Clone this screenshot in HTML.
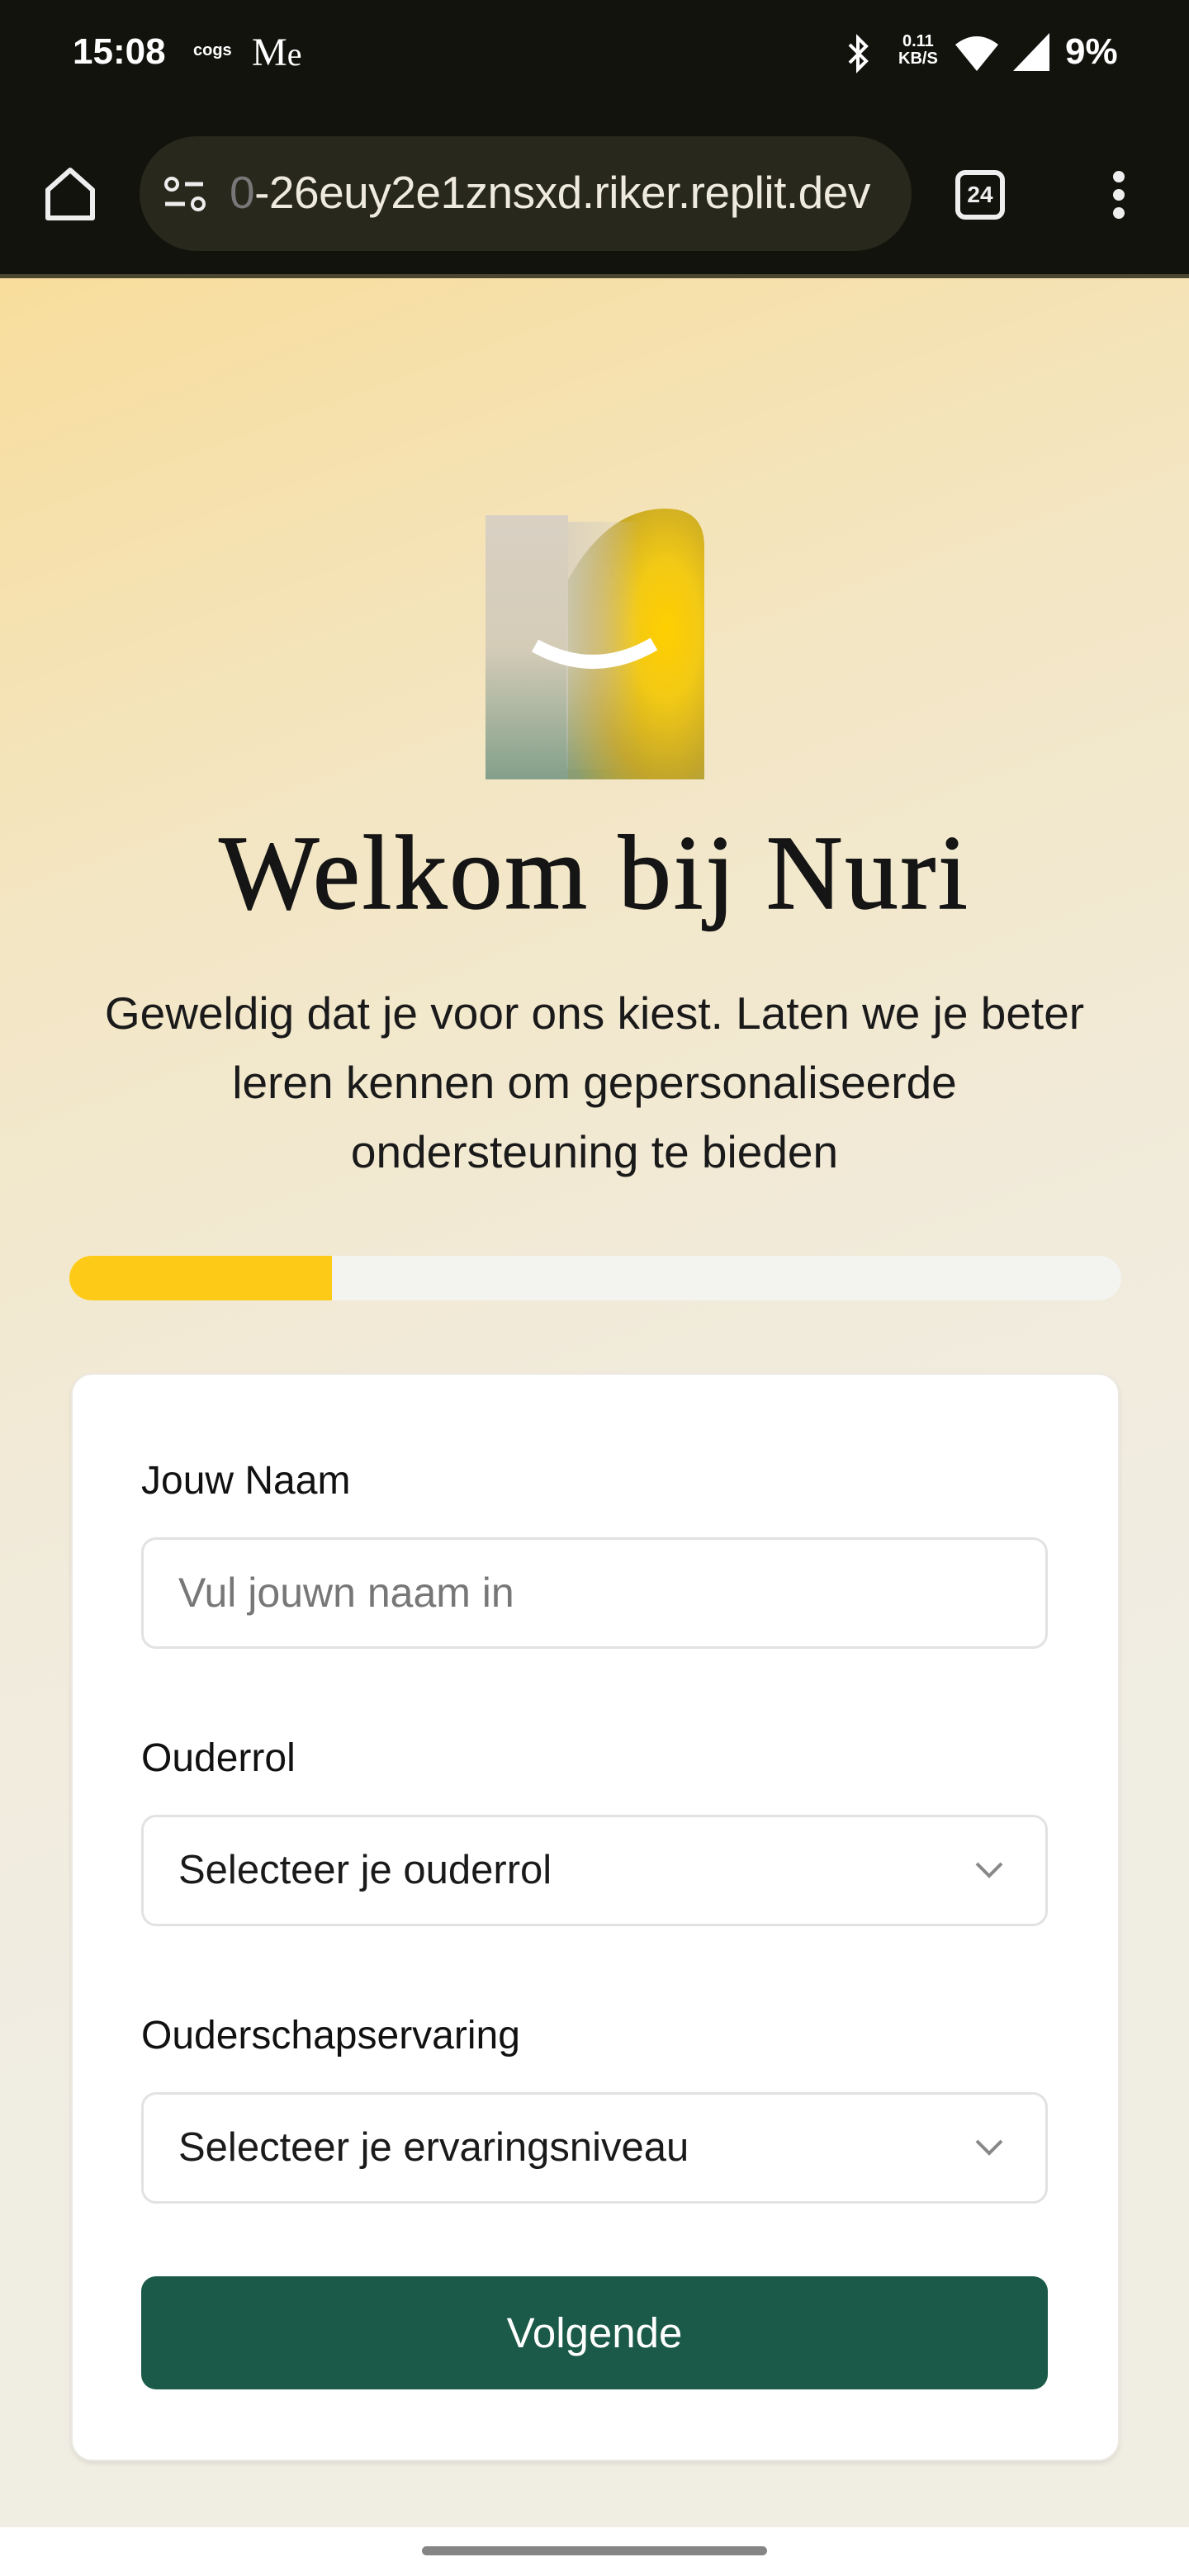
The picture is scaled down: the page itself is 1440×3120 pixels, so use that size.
<!DOCTYPE html>
<html><head><meta charset="utf-8"><style>
*{margin:0;padding:0;box-sizing:border-box}
body{width:1440px;height:3120px;overflow:hidden;font-family:"Liberation Sans",sans-serif;position:relative;background:#fff}
.top{position:absolute;left:0;top:0;width:1440px;height:332px;background:#13130e;color:#fff}
.line{position:absolute;left:0;top:332px;width:1440px;height:5px;background:#4a4630}
.page{position:absolute;left:0;top:337px;width:1440px;height:2724px;background:linear-gradient(160deg,#f8dd9c 0%,#f3e6c4 25%,#f1ebdc 50%,#f0ede3 70%,#f0ede3 100%)}
.abs{position:absolute}
.lbl{position:absolute;left:171px;font-size:48px;color:#111}
.field{position:absolute;left:171px;width:1098px;height:135px;border:3px solid #e2e2e2;border-radius:18px;background:#fff}
.field span{position:absolute;left:42px;top:0;line-height:129px;font-size:49px;color:#1a1a1a}
.chev{position:absolute;right:50px;top:52px}
</style></head><body>
<div class="top">
  <div class="abs" style="left:88px;top:38px;font-size:44px;font-weight:bold">15:08</div>
  <div class="abs" style="left:234px;top:50px;font-size:20px;font-weight:bold">cogs</div>
  <div class="abs" style="left:305px;top:36px;font-size:48px;font-family:'Liberation Serif',serif">M<span style="font-size:40px">e</span></div>
  <svg class="abs" style="left:1025px;top:40px" width="30" height="50" viewBox="0 0 30 50"><path d="M4 14 L24 34 L14 44 V6 L24 16 L4 36" fill="none" stroke="#fff" stroke-width="4"/></svg>
  <div class="abs" style="left:1088px;top:40px;font-size:20px;font-weight:bold;line-height:21px;text-align:center">0.11<br>KB/S</div>
  <svg class="abs" style="left:1155px;top:42px" width="56" height="46" viewBox="0 0 56 46"><path d="M2 12 Q28 -8 54 12 L28 44 Z" fill="#fff"/></svg>
  <svg class="abs" style="left:1225px;top:38px" width="48" height="50" viewBox="0 0 48 50"><path d="M46 2 V48 H2 Z" fill="#fff"/></svg>
  <div class="abs" style="left:1290px;top:38px;font-size:44px;font-weight:bold">9%</div>
  <svg class="abs" style="left:52px;top:200px" width="66" height="70" viewBox="0 0 66 70"><path d="M6 30 L33 6 L60 30 V64 H6 Z" fill="none" stroke="#eee" stroke-width="6" stroke-linejoin="round"/></svg>
  <div class="abs" style="left:169px;top:165px;width:935px;height:139px;border-radius:70px;background:#28281c"></div>
  <svg class="abs" style="left:196px;top:213px" width="56" height="46" viewBox="0 0 56 46"><circle cx="12" cy="10" r="7" fill="none" stroke="#eee" stroke-width="4"/><path d="M28 10 H50 M4 34 H28" stroke="#eee" stroke-width="5"/><circle cx="44" cy="34" r="7" fill="none" stroke="#eee" stroke-width="4"/></svg>
  <div class="abs" style="left:278px;top:201px;font-size:55px;color:#eeeade;white-space:nowrap;letter-spacing:-0.5px"><span style="color:#777">0</span>-26euy2e1znsxd.riker.replit.dev</div>
  <div class="abs" style="left:1157px;top:206px;width:60px;height:60px;border:6px solid #eee;border-radius:12px;color:#eee;font-size:28px;font-weight:bold;text-align:center;line-height:48px">24</div>
  <svg class="abs" style="left:1342px;top:205px" width="26" height="62"><circle cx="13" cy="9" r="7" fill="#eee"/><circle cx="13" cy="31" r="7" fill="#eee"/><circle cx="13" cy="53" r="7" fill="#eee"/></svg>
</div>
<div class="line"></div>
<div class="page"></div>
<svg class="abs" style="left:586px;top:612px" width="270" height="336" viewBox="0 0 270 336">
<defs>
<radialGradient id="g" cx="0.72" cy="0.45" r="0.85"><stop offset="0" stop-color="#ffcf00"/><stop offset="0.3" stop-color="#f2c915"/><stop offset="0.65" stop-color="#c2a52a"/><stop offset="1" stop-color="#8a9e72"/></radialGradient>
<linearGradient id="l" x1="0" y1="0" x2="0" y2="1"><stop offset="0" stop-color="#d9d0c3"/><stop offset="0.5" stop-color="#d5ccb8"/><stop offset="1" stop-color="#83a08a"/></linearGradient>
<linearGradient id="f" x1="0" y1="0" x2="1" y2="0"><stop offset="0" stop-color="#d7cfbf" stop-opacity="1"/><stop offset="0.5" stop-color="#d7cfbf" stop-opacity="0.6"/><stop offset="1" stop-color="#d7cfbf" stop-opacity="0"/></linearGradient>
<linearGradient id="v" x1="0" y1="0" x2="0" y2="1"><stop offset="0" stop-color="#fff" stop-opacity="1"/><stop offset="0.55" stop-color="#fff" stop-opacity="1"/><stop offset="1" stop-color="#fff" stop-opacity="0"/></linearGradient>
<mask id="m"><rect x="0" y="0" width="270" height="336" fill="url(#v)"/></mask>
</defs>
<path d="M102 90 Q150 4 220 4 Q267 4 267 50 V332 H102 Z" fill="url(#g)"/>
<rect x="2" y="12" width="100" height="320" fill="url(#l)"/>
<rect x="100" y="20" width="90" height="300" fill="url(#f)" mask="url(#m)" opacity="0.8"/>
<path d="M62 170 Q134 210 206 168" fill="none" stroke="#fff" stroke-width="17"/>
</svg>
<div class="abs" style="left:0;top:984px;width:1440px;text-align:center;font-family:'Liberation Serif',serif;font-size:128px;color:#151515;letter-spacing:3px;-webkit-text-stroke:1.5px #151515">Welkom bij Nuri</div>
<div class="abs" style="left:40px;top:1185px;width:1360px;text-align:center;font-size:55px;line-height:84px;color:#1a1a1a">Geweldig dat je voor ons kiest. Laten we je beter<br>leren kennen om gepersonaliseerde<br>ondersteuning te bieden</div>
<div class="abs" style="left:84px;top:1521px;width:1274px;height:54px;border-radius:27px;background:#f3f3f0;overflow:hidden"><div style="width:318px;height:54px;background:#fdcb17"></div></div>
<div class="abs" style="left:86px;top:1663px;width:1270px;height:1318px;background:#fff;border-radius:26px;box-shadow:0 3px 6px rgba(0,0,0,0.08);border:2px solid #ece9e2"></div>
<div class="lbl" style="top:1766px">Jouw Naam</div>
<div class="field" style="top:1862px"><span style="color:#777;font-size:50px">Vul jouwn naam in</span></div>
<div class="lbl" style="top:2102px">Ouderrol</div>
<div class="field" style="top:2198px"><span>Selecteer je ouderrol</span><svg class="chev" width="36" height="24"><path d="M3 4 L18 19 L33 4" fill="none" stroke="#888" stroke-width="4"/></svg></div>
<div class="lbl" style="top:2438px">Ouderschapservaring</div>
<div class="field" style="top:2534px"><span>Selecteer je ervaringsniveau</span><svg class="chev" width="36" height="24"><path d="M3 4 L18 19 L33 4" fill="none" stroke="#888" stroke-width="4"/></svg></div>
<div class="abs" style="left:171px;top:2757px;width:1098px;height:137px;border-radius:18px;background:#1b5a48;color:#fff;font-size:51px;text-align:center;line-height:137px">Volgende</div>
<div class="abs" style="left:511px;top:3084px;width:418px;height:11px;border-radius:6px;background:#858585"></div>
</body></html>
